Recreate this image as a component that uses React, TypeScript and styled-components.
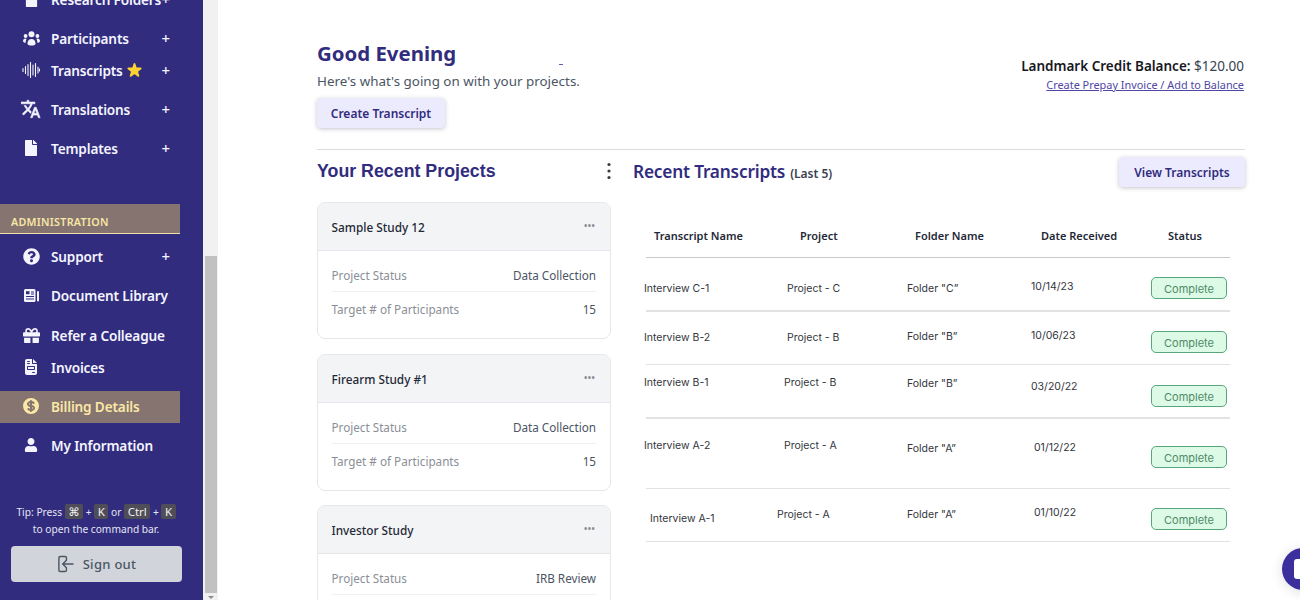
import React from "react";
import styled, { createGlobalStyle } from "styled-components";
import { FaFile, FaQuestionCircle, FaGift, FaUser } from "react-icons/fa";
import { FaFileInvoice } from "react-icons/fa6";
import { HiCurrencyDollar, HiStar } from "react-icons/hi";

const GlobalStyle = createGlobalStyle`
  html, body {
    margin: 0;
    padding: 0;
    height: 100%;
    overflow: hidden;
    background: #fff;
  }
  body {
    font-family: "Noto Sans", "Open Sans", sans-serif;
  }
`;

const Page = styled.div`
  display: flex;
  width: 1300px;
  height: 600px;
  overflow: hidden;
  position: relative;
`;

const Sidebar = styled.aside`
  width: 203px;
  height: 600px;
  flex: none;
  background: #312c7e;
  overflow: hidden;
  display: flex;
  flex-direction: column;
  color: #fff;
`;

const NavRow = styled.div<{ $gap?: number; $active?: boolean }>`
  height: 32px;
  width: 180px;
  flex: none;
  box-sizing: border-box;
  padding-bottom: 2px;
  margin-top: ${p => p.$gap || 0}px;
  display: flex;
  align-items: center;
  white-space: nowrap;
  font-size: 13.6px;
  font-weight: 600;
  letter-spacing: -0.15px;
  background: ${p => (p.$active ? "#857470" : "transparent")};
  color: ${p => (p.$active ? "#fbe8a6" : "#f4f4ff")};
`;

const IconSlot = styled.span`
  width: 20px;
  margin-left: 21px;
  margin-right: 10px;
  display: flex;
  justify-content: center;
  align-items: center;
  flex: none;
`;

const Plus = styled.span`
  margin-left: auto;
  margin-right: 10px;
  font-size: 15px;
  font-weight: 500;
`;

const Star = styled(HiStar)`
  color: #fcd232;
  margin-left: 2px;
`;

const SectionBand = styled.div`
  margin-top: 39px;
  width: 180px;
  height: 29px;
  flex: none;
  background: #857470;
  border-bottom: 1px solid #f0dfa8;
  display: flex;
  align-items: flex-end;
  font-size: 10.7px;
  font-weight: 600;
  letter-spacing: 0.3px;
  color: #f7e6a4;
`;

const BandLabel = styled.span`
  margin-left: 11px;
  margin-bottom: 4px;
`;

const Tip = styled.div`
  margin-top: 42px;
  width: 192px;
  text-align: center;
  font-size: 10.2px;
  line-height: 17px;
  color: #e6e6f5;
`;

const Key = styled.kbd`
  display: inline-block;
  background: #4f4e58;
  color: #f1f1f1;
  font-family: "Noto Sans", "DejaVu Sans", sans-serif;
  font-size: 11.5px;
  line-height: 15px;
  padding: 0 3.5px;
  border-radius: 2px;
`;

const SignOut = styled.button`
  margin: 8px 0 0 11px;
  width: 171px;
  height: 36px;
  flex: none;
  border: none;
  border-radius: 4px;
  background: #d1d5db;
  color: #4b5563;
  font-family: "Noto Sans", sans-serif;
  font-size: 13px;
  font-weight: 500;
  letter-spacing: 0.3px;
  display: flex;
  align-items: center;
  justify-content: center;
  gap: 9px;
`;

const ScrollTrack = styled.div`
  width: 15px;
  height: 600px;
  flex: none;
  background: #f1f1f1;
  display: flex;
  flex-direction: column;
  align-items: center;
`;

const ScrollThumb = styled.div`
  width: 12px;
  height: 337px;
  margin-top: 256px;
  background: #c1c1c1;
`;

const ScrollArrow = styled.div`
  margin-top: 3px;
  width: 0;
  height: 0;
  border-left: 3px solid transparent;
  border-right: 3px solid transparent;
  border-top: 3px solid #8a8a8a;
`;

const Main = styled.main`
  flex: 1;
  min-width: 0;
  padding: 41px 55px 0 99px;
  display: flex;
  flex-direction: column;
`;

const TopRow = styled.div`
  display: flex;
  justify-content: space-between;
  height: 108px;
  flex: none;
  border-bottom: 1px solid #dcdcdc;
`;

const Greeting = styled.h1`
  margin: 0;
  font-size: 20.4px;
  line-height: 24px;
  font-weight: 700;
  color: #312c7e;
`;

const Subtitle = styled.p`
  margin: 6px 0 0;
  font-size: 13.4px;
  line-height: 20px;
  color: #4b5563;
`;

const SoftButton = styled.button`
  display: block;
  height: 30px;
  border: none;
  border-radius: 4px;
  background: #ecebfd;
  color: #312c7e;
  box-shadow: 0 1px 4px rgba(60, 60, 90, 0.3);
  font-family: "Noto Sans", sans-serif;
  font-size: 12px;
  font-weight: 600;
  padding: 0;
`;

const CreateButton = styled(SoftButton)`
  width: 128px;
  margin-top: 7px;
`;

const Speck = styled.span`
  position: absolute;
  left: 559px;
  top: 64px;
  width: 4px;
  height: 1px;
  background: #5b5bb5;
`;

const Balance = styled.div`
  margin-top: 15px;
  text-align: right;
  margin-right: 1px;
`;

const BalanceLine = styled.div`
  font-size: 13.5px;
  line-height: 20px;
  color: #374151;
`;

const BalanceLabel = styled.b`
  font-weight: 600;
  color: #17171f;
`;

const BalanceLink = styled.a`
  display: block;
  margin-top: 2px;
  font-size: 10.9px;
  line-height: 14px;
  color: #4f46a5;
  text-decoration: underline;
`;

const Columns = styled.div`
  display: flex;
  gap: 22px;
`;

const LeftCol = styled.section`
  width: 294px;
  flex: none;
`;

const LeftHead = styled.div`
  height: 42px;
  margin-bottom: 10px;
  display: flex;
  align-items: center;
  justify-content: space-between;
`;

const LeftTitle = styled.h2`
  margin: 0;
  font-family: "Liberation Sans", Arial, sans-serif;
  font-size: 17.8px;
  font-weight: 700;
  color: #312c7e;
`;

const Kebab = styled.svg`
  margin-right: 0;
`;

const Card = styled.article<{ $gap: number }>`
  margin-top: ${p => p.$gap}px;
  border: 1px solid #e5e7eb;
  border-radius: 8px;
  height: 137px;
  box-sizing: border-box;
  overflow: hidden;
`;

const CardHead = styled.header`
  height: 47px;
  background: #f3f4f6;
  border-bottom: 1px solid #e5e7eb;
  display: flex;
  align-items: center;
  justify-content: space-between;
  padding: 0 15px 0 13.5px;
  font-size: 11.8px;
  font-weight: 500;
  color: #1f2937;
`;

const Dots = styled.span`
  font-size: 10px;
  font-weight: 500;
  color: #858a93;
  margin-top: -1px;
`;

const CardBody = styled.div`
  padding: 7px 14px 0 13.5px;
`;

const CardRow = styled.div<{ $rule?: boolean }>`
  display: flex;
  justify-content: space-between;
  align-items: center;
  height: 33px;
  font-size: 11.7px;
  border-bottom: ${p => (p.$rule ? "1px solid #f0f1f3" : "none")};
`;

const CardKey = styled.span`
  color: #8b8f97;
`;

const CardValue = styled.span`
  color: #4b5563;
`;

const RightCol = styled.section`
  flex: 1;
  min-width: 0;
`;

const RightHead = styled.div`
  height: 38px;
  margin-top: 3px;
  display: flex;
  align-items: center;
  justify-content: space-between;
`;

const RightTitle = styled.h2`
  margin: 0;
  padding-bottom: 2px;
  font-size: 17.3px;
  font-weight: 600;
  color: #312c7e;
  letter-spacing: -0.2px;
`;

const LastFive = styled.small`
  font-size: 12px;
  font-weight: 600;
  color: #374151;
  margin-left: 5px;
  letter-spacing: 0;
`;

const ViewButton = styled(SoftButton)`
  width: 126px;
`;

const Table = styled.div`
  margin: 24px 15px 0 11px;
  font-family: Inter, "Noto Sans", sans-serif;
`;

const HeadRow = styled.div`
  height: 43px;
  border-bottom: 1px solid #c9c9c9;
  margin-top: 4px;
  margin-left: 2px;
  display: grid;
  grid-template-columns: 131px 130px 124px 120px 1fr;
  align-items: center;
  font-family: "Noto Sans", sans-serif;
  font-size: 11px;
  font-weight: 600;
  color: #1f2937;
  padding-bottom: 2px;
  box-sizing: border-box;
`;

const HeadCell = styled.div<{ $left: number }>`
  margin-left: ${p => p.$left}px;
`;

const DataRow = styled.div<{ $h: number; $line: number }>`
  height: ${p => p.$h}px;
  border-bottom: ${p => p.$line}px solid #e2e2e2;
  margin-left: 2px;
  display: grid;
  grid-template-columns: 131px 130px 124px 120px 1fr;
  align-items: start;
  font-size: 10.5px;
  color: #33363c;
`;

const Cell = styled.div<{ $left: number; $top: number }>`
  margin-left: ${p => p.$left}px;
  margin-top: ${p => p.$top}px;
  line-height: 14px;
  white-space: nowrap;
`;

const Badge = styled.span<{ $top: number }>`
  margin-top: ${p => p.$top}px;
  width: 76px;
  height: 22px;
  box-sizing: border-box;
  padding-top: 1px;
  border: 1px solid #58a77c;
  border-radius: 5px;
  background: #dcfae6;
  color: #4f8a68;
  font-size: 11px;
  display: flex;
  align-items: center;
  justify-content: center;
`;

const ChatBubble = styled.div`
  position: absolute;
  left: 1282px;
  top: 548px;
  width: 42px;
  height: 42px;
  border-radius: 50%;
  background: #3a2f9d;
  box-shadow: 0 2px 12px rgba(40, 40, 90, 0.15);
  display: flex;
  align-items: center;
`;

const ChatIcon = styled.span`
  width: 12px;
  height: 20px;
  margin-left: 12px;
  background: #fff;
  border-radius: 3px 0 0 3px;
`;

const PeopleIcon = () => (
  <svg width="17" height="15" viewBox="0 0 17 15" fill="currentColor">
    <circle cx="8.500" cy="3.200" r="3" />
    <circle cx="2.600" cy="5" r="1.900" />
    <circle cx="14.400" cy="5" r="1.900" />
    <path d="M4.500 12.500c0-3 1.700-4.500 4-4.500s4 1.500 4 4.500c0 1.500-1.500 2-4 2s-4-.5-4-2z" />
    <path d="M3.500 8c-.6 1-.9 2.300-.9 3.800C1.200 11.700 0 11.200 0 10c0-1.500 1-2.500 2.500-2.500.4 0 .7.200 1 .5zM13.500 8c.6 1 .9 2.300.9 3.800 1.400-.1 2.600-.6 2.600-1.800 0-1.500-1-2.500-2.500-2.500-.4 0-.7.200-1 .5z" />
  </svg>
);

const WaveIcon = () => (
  <svg width="18" height="16" viewBox="0 0 18 16" fill="none" stroke="currentColor" strokeWidth="1.100" strokeLinecap="round">
    <path d="M1 6.500v3M3.500 4.500v7M6 2.500v11M8.500 0.500v15M11 3v10M13.500 1.500v13M16 5v6M17.500 7v2" />
  </svg>
);

const TranslateIcon = () => (
  <svg width="20" height="20" viewBox="1 1 23 22" fill="currentColor" stroke="currentColor" strokeWidth="0.7">
    <path d="M12.870 15.070l-2.540-2.510.030-.030c1.740-1.940 2.980-4.170 3.710-6.530H17V4h-7V2H8v2H1v1.990h11.170C11.500 7.920 10.440 9.750 9 11.350 8.070 10.320 7.300 9.190 6.690 8h-2c.730 1.630 1.730 3.170 2.980 4.560l-5.090 5.020L4 19l5-5 3.110 3.110.760-2.040zM18.500 10h-2L12 22h2l1.120-3h4.750L21 22h2l-4.500-12zm-2.620 7l1.620-4.330L19.120 17h-3.240z" />
  </svg>
);

const LibraryIcon = () => (
  <svg width="15" height="13" viewBox="0 0 15 13">
    <rect width="11.500" height="13" rx="1.500" fill="currentColor" />
    <rect x="2" y="2.200" width="3.500" height="3" fill="#312c7e" />
    <path d="M7 3h3M7 5h3M2 7.500h8M2 10h8" stroke="#312c7e" strokeWidth="1" />
    <rect x="13" y="2" width="2" height="10.500" rx="1" fill="currentColor" />
  </svg>
);

const SignOutIcon = () => (
  <svg width="17" height="18" viewBox="0 0 18 18" fill="none" stroke="#4b5563" strokeWidth="1.500" strokeLinecap="round" strokeLinejoin="round">
    <path d="M10 5V2.500A1.500 1.500 0 0 0 8.500 1h-5A1.500 1.500 0 0 0 2 2.500v13A1.500 1.500 0 0 0 3.500 17h5a1.500 1.500 0 0 0 1.500-1.500V13" />
    <path d="M17 9H6.500M9.500 5.500 6 9l3.500 3.500" />
  </svg>
);

const navTop = [
  { label: "Research Folders", icon: <FaFile size={15} />, plus: true, gap: -16 },
  { label: "Participants", icon: <PeopleIcon />, plus: true, gap: 7 },
  { label: "Transcripts", icon: <WaveIcon />, plus: true, gap: 0, star: true },
  { label: "Translations", icon: <TranslateIcon />, plus: true, gap: 7 },
  { label: "Templates", icon: <FaFile size={16} />, plus: true, gap: 7 }
];

const navAdmin = [
  { label: "Support", icon: <FaQuestionCircle size={17} />, plus: true, gap: 7 },
  { label: "Document Library", icon: <LibraryIcon />, gap: 7 },
  { label: "Refer a Colleague", icon: <FaGift size={17} />, gap: 8 },
  { label: "Invoices", icon: <FaFileInvoice size={16} />, gap: 0 },
  { label: "Billing Details", icon: <HiCurrencyDollar size={22} />, gap: 7, active: true },
  { label: "My Information", icon: <FaUser size={14} />, gap: 7 }
];

const projects = [
  { name: "Sample Study 12", status: "Data Collection", gap: 0 },
  { name: "Firearm Study #1", status: "Data Collection", gap: 15 },
  { name: "Investor Study", status: "IRB Review", gap: 14 }
];

const heads = [
  { label: "Transcript Name", left: 8 },
  { label: "Project", left: 23 },
  { label: "Folder Name", left: 8 },
  { label: "Date Received", left: 10 },
  { label: "Status", left: 17 }
];

// offsets in the source screenshot are uneven from row to row, so each cell keeps its own
const rows = [
  {
    h: 52, line: 2,
    cells: [["Interview C-1", -2, 24], ["Project - C", 10, 24], ["Folder \"C”", 0, 24], ["10/14/23", 0, 22]],
    badge: 19
  },
  {
    h: 52, line: 1,
    cells: [["Interview B-2", -2, 19], ["Project - B", 10, 19], ["Folder \"B”", 0, 18], ["10/06/23", 0, 17]],
    badge: 19
  },
  {
    h: 52, line: 2,
    cells: [["Interview B-1", -2, 11], ["Project - B", 7, 11], ["Folder \"B”", 0, 12], ["03/20/22", 0, 15]],
    badge: 20
  },
  {
    h: 69, line: 1,
    cells: [["Interview A-2", -2, 20], ["Project - A", 7, 20], ["Folder \"A”", 0, 23], ["01/12/22", 3, 22]],
    badge: 27
  },
  {
    h: 52, line: 1,
    cells: [["Interview A-1", 4, 23], ["Project - A", 0, 19], ["Folder \"A”", 0, 19], ["01/10/22", 3, 17]],
    badge: 19
  }
] as { h: number; line: number; cells: [string, number, number][]; badge: number }[];

const App = () => (
  <Page>
    <GlobalStyle />
    <Sidebar>
      {navTop.map(item => (
        <NavRow key={item.label} $gap={item.gap}>
          <IconSlot>{item.icon}</IconSlot>
          {item.label}
          {item.star && <Star size={19} />}
          {item.plus && <Plus>+</Plus>}
        </NavRow>
      ))}
      <SectionBand>
        <BandLabel>ADMINISTRATION</BandLabel>
      </SectionBand>
      {navAdmin.map(item => (
        <NavRow key={item.label} $gap={item.gap} $active={item.active}>
          <IconSlot>{item.icon}</IconSlot>
          {item.label}
          {item.plus && <Plus>+</Plus>}
        </NavRow>
      ))}
      <Tip>
        Tip: Press <Key>⌘</Key> + <Key>K</Key> or <Key>Ctrl</Key> + <Key>K</Key>
        <br />
        to open the command bar.
      </Tip>
      <SignOut>
        <SignOutIcon />
        Sign out
      </SignOut>
    </Sidebar>
    <ScrollTrack>
      <ScrollThumb />
      <ScrollArrow />
    </ScrollTrack>
    <Main>
      <TopRow>
        <div>
          <Greeting>Good Evening</Greeting>
          <Subtitle>Here's what's going on with your projects.</Subtitle>
          <CreateButton>Create Transcript</CreateButton>
        </div>
        <Balance>
          <BalanceLine>
            <BalanceLabel>Landmark Credit Balance:</BalanceLabel> $120.00
          </BalanceLine>
          <BalanceLink>Create Prepay Invoice / Add to Balance</BalanceLink>
        </Balance>
      </TopRow>
      <Columns>
        <LeftCol>
          <LeftHead>
            <LeftTitle>Your Recent Projects</LeftTitle>
            <Kebab width="4" height="18" viewBox="0 0 4 18" fill="#3b3b45">
              <circle cx="2" cy="2.500" r="1.600" />
              <circle cx="2" cy="9" r="1.600" />
              <circle cx="2" cy="15.500" r="1.600" />
            </Kebab>
          </LeftHead>
          {projects.map(project => (
            <Card key={project.name} $gap={project.gap}>
              <CardHead>
                {project.name}
                <Dots>•••</Dots>
              </CardHead>
              <CardBody>
                <CardRow $rule>
                  <CardKey>Project Status</CardKey>
                  <CardValue>{project.status}</CardValue>
                </CardRow>
                <CardRow>
                  <CardKey>Target # of Participants</CardKey>
                  <CardValue>15</CardValue>
                </CardRow>
              </CardBody>
            </Card>
          ))}
        </LeftCol>
        <RightCol>
          <RightHead>
            <RightTitle>
              Recent Transcripts<LastFive>(Last 5)</LastFive>
            </RightTitle>
            <ViewButton>View Transcripts</ViewButton>
          </RightHead>
          <Table>
            <HeadRow>
              {heads.map(head => (
                <HeadCell key={head.label} $left={head.left}>
                  {head.label}
                </HeadCell>
              ))}
            </HeadRow>
            {rows.map(row => (
              <DataRow key={row.cells[0][0]} $h={row.h} $line={row.line}>
                {row.cells.map(([text, left, top]) => (
                  <Cell key={text} $left={left} $top={top}>
                    {text}
                  </Cell>
                ))}
                <Badge $top={row.badge}>Complete</Badge>
              </DataRow>
            ))}
          </Table>
        </RightCol>
      </Columns>
    </Main>
    <Speck />
    <ChatBubble>
      <ChatIcon />
    </ChatBubble>
  </Page>
);

export default App;
